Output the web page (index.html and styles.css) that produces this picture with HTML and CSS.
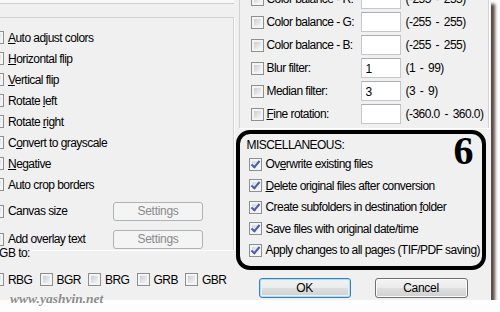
FILE: index.html
```html
<!DOCTYPE html>
<html>
<head>
  <title>Options</title>
  <link rel="stylesheet" href="styles.css">
</head>
<body>
  <div class="dialog">
    <div class="left">
      <div class="tabline"></div>
      <div class="group group-left">
        <div class="check"><span class="box"></span><span><u>A</u>uto adjust colors</span></div>
        <div class="check"><span class="box"></span><span><u>H</u>orizontal flip</span></div>
        <div class="check"><span class="box"></span><span><u>V</u>ertical flip</span></div>
        <div class="check"><span class="box"></span><span>Rotate <u>l</u>eft</span></div>
        <div class="check"><span class="box"></span><span>Rotate <u>r</u>ight</span></div>
        <div class="check"><span class="box"></span><span>C<u>o</u>nvert to grayscale</span></div>
        <div class="check"><span class="box"></span><span><u>N</u>egative</span></div>
        <div class="check"><span class="box"></span><span>Auto crop borders</span></div>
        <div class="check setting-row first"><span class="box"></span><span class="setting-label">Canvas size</span><button class="btn" disabled>Settings</button></div>
        <div class="check setting-row"><span class="box"></span><span class="setting-label">Add overlay text</span><button class="btn" disabled>Settings</button></div>
      </div>
      <div class="swap-title">RGB to:</div>
      <div class="swap-row">
        <div class="swap"><span class="box"></span><span>RBG</span></div>
        <div class="swap"><span class="box"></span><span>BGR</span></div>
        <div class="swap"><span class="box"></span><span>BRG</span></div>
        <div class="swap"><span class="box"></span><span>GRB</span></div>
        <div class="swap"><span class="box"></span><span>GBR</span></div>
      </div>
    </div>

    <div class="right">
      <div class="group group-right">
        <div class="param"><span class="box"></span><span class="param-label">Color balance - R:</span><span class="field"></span><span class="range">(-255 - 255)</span></div>
        <div class="param"><span class="box"></span><span class="param-label">Color balance - G:</span><span class="field"></span><span class="range">(-255 - 255)</span></div>
        <div class="param"><span class="box"></span><span class="param-label">Color balance - B:</span><span class="field"></span><span class="range">(-255 - 255)</span></div>
        <div class="param"><span class="box"></span><span class="param-label">Blur filter:</span><span class="field">1</span><span class="range">(1 - 99)</span></div>
        <div class="param"><span class="box"></span><span class="param-label">Median filter:</span><span class="field">3</span><span class="range">(3 - 9)</span></div>
        <div class="param"><span class="box"></span><span class="param-label"><u>F</u>ine rotation:</span><span class="field"></span><span class="range">(-360.0 - 360.0)</span></div>
      </div>

      <div class="misc">
        <div class="misc-title">MISCELLANEOUS:</div>
        <div class="check"><span class="box checked"></span><span>Ov<u>e</u>rwrite existing files</span></div>
        <div class="check"><span class="box checked"></span><span><u>D</u>elete original files after conversion</span></div>
        <div class="check"><span class="box checked"></span><span>Create subfolders in destination <u>f</u>older</span></div>
        <div class="check"><span class="box checked"></span><span>Save files with original date/time</span></div>
        <div class="check"><span class="box checked"></span><span>Apply changes to all pages (TIF/PDF saving)</span></div>
        <div class="mark">6</div>
      </div>

      <div class="buttons">
        <button class="btn default">OK</button>
        <button class="btn">Cancel</button>
      </div>
    </div>
  </div>

  <div class="watermark">www.yashvin.net</div>
</body>
</html>
```

FILE: styles.css
```css
body {
  margin: 0;
  background-color: #fdfdfd;
  font-family: "Liberation Sans", Arial, sans-serif;
  font-size: 12px;
  letter-spacing: -0.55px;
  color: #000;
  white-space: nowrap;
}

.dialog {
  display: flex;
  width: 491px;
  height: 300px;
  overflow: hidden;
  background-color: #f0f0f0;
  box-shadow: 4px 4px 3px rgba(70, 55, 45, 0.9);
}

/* checkbox */
.box {
  flex: none;
  box-sizing: border-box;
  width: 13px;
  height: 13px;
  padding: 2px;
  border: 1px solid #8e8f8f;
  background: linear-gradient(135deg, #c9ccd2, #f7f7f7) content-box, #f4f4f4;
}

.box.checked {
  background: linear-gradient(135deg, #d3d8e8, #f7f7f7) content-box, #f4f4f4;
  position: relative;
}

.box.checked::after {
  content: "";
  position: absolute;
  left: 3px;
  top: 0px;
  width: 3px;
  height: 7px;
  border: solid #4b5ea6;
  border-width: 0 2px 2px 0;
  transform: rotate(40deg);
}

.btn {
  box-sizing: border-box;
  height: 20px;
  font-family: inherit;
  font-size: 12px;
  letter-spacing: -0.3px;
  color: #000;
  border: 1px solid #707070;
  border-radius: 3px;
  background: linear-gradient(#f3f3f3 0%, #ebebeb 50%, #dedede 51%, #d0d0d0 100%);
  box-shadow: inset 0 0 0 1px #fbfbfb;
  padding: 0;
}

.btn.default {
  border-color: #3c7fb1;
  box-shadow: inset 0 0 0 1px #a8dff4, inset 0 0 0 2px #e2f3fb;
}

.btn:disabled {
  border-color: #adb2b5;
  background: #f4f4f4;
  box-shadow: none;
  color: #8a8a8a;
}

/* left column */
.left {
  flex: 0 0 250px;
  margin-left: -17px;
}

.tabline {
  height: 3px;
  background-color: #f8f8f8;
  border-bottom: 1px solid #cdcdcd;
}

.group {
  box-sizing: border-box;
  border: 1px solid #d2d2d2;
  box-shadow: 1px 1px 0 #fff;
}

.group-left {
  margin-top: 13px;
  padding: 9px 0 1px 8px;
  border-left: none;
  border-bottom: none;
}

.check {
  display: flex;
  align-items: center;
  gap: 4px;
  height: 21px;
}

.setting-row {
  height: 20px;
  margin-top: 8px;
}

.setting-row.first {
  margin-top: 6px;
}

.setting-label {
  width: 101px;
}

.setting-row .btn {
  width: 90px;
  height: 19px;
}

.swap-title {
  margin-top: -4px;
  padding-left: 8px;
  line-height: 14px;
}

.swap-row {
  display: grid;
  grid-template-columns: repeat(5, 48.5px);
  margin-top: 13px;
  padding-left: 8px;
}

.swap {
  display: flex;
  align-items: center;
  gap: 4px;
  height: 13px;
}

/* right column */
.right {
  flex: 1;
}

.group-right {
  width: 250px;
  margin: -30px 0 0 5px;
  padding: 18px 0 4px 11px;
  border-bottom: none;
  display: flex;
  flex-direction: column;
  gap: 3px;
}

.param {
  display: flex;
  align-items: center;
  height: 20px;
}

.param-label {
  width: 94px;
  margin-left: 3px;
}

.field {
  box-sizing: border-box;
  width: 40px;
  height: 20px;
  padding: 3px 4px;
  background-color: #fff;
  border: 1px solid #c5c7cc;
  border-top-color: #abadb3;
}

.range {
  margin-left: 5px;
  word-spacing: 2px;
}

.misc {
  position: relative;
  box-sizing: border-box;
  width: 250px;
  height: 140px;
  margin: 2px 0 0 2px;
  padding: 4px 7px 5px 9px;
  border: 4px solid #000;
  border-radius: 14px;
}

.misc-title {
  margin-left: -2px;
  line-height: 14px;
  margin-bottom: 1.5px;
}

.misc .check {
  height: 21.5px;
}

.mark {
  position: absolute;
  top: -3px;
  right: 8px;
  font-family: "Liberation Serif", "Times New Roman", serif;
  font-weight: bold;
  font-size: 40px;
  line-height: 1;
  letter-spacing: 0;
}

.buttons {
  display: flex;
  gap: 24px;
  margin-top: 8px;
  padding-left: 25px;
}

.buttons .btn {
  width: 92px;
}

.buttons .btn + .btn {
  width: 93px;
}

.watermark {
  position: absolute;
  left: 10px;
  top: 291px;
  font-family: "Liberation Serif", "Times New Roman", serif;
  font-style: italic;
  font-weight: bold;
  font-size: 13.5px;
  letter-spacing: 0;
  color: #8c8c8c;
  text-shadow: 0 0 2px #fff;
}
```
